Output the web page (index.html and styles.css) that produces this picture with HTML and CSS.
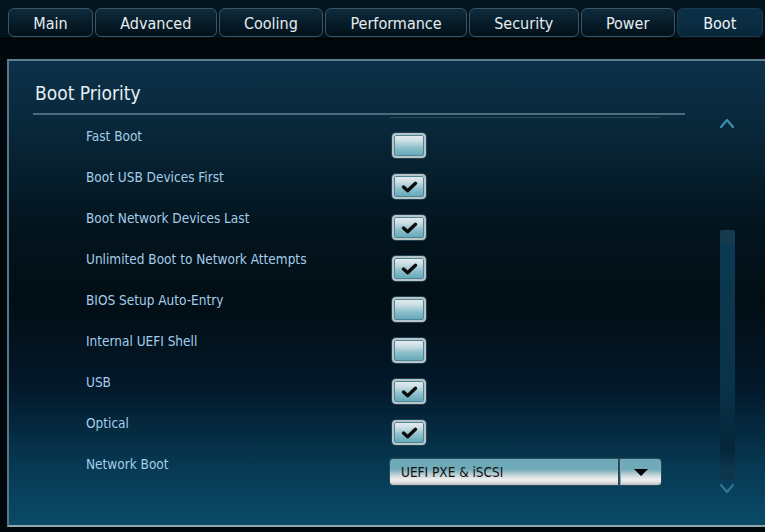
FILE: index.html
```html
<!DOCTYPE html>
<html lang="en">
<head>
<meta charset="utf-8">
<title>Boot</title>
<link rel="stylesheet" href="styles.css">
</head>
<body>
<div class="screen">
  <nav class="tabs">
    <span class="tab">Main</span>
    <span class="tab">Advanced</span>
    <span class="tab">Cooling</span>
    <span class="tab">Performance</span>
    <span class="tab">Security</span>
    <span class="tab">Power</span>
    <span class="tab active">Boot</span>
  </nav>
  <div class="band"></div>
  <section class="panel">
    <h2 class="panel-title">Boot Priority</h2>
    <div class="panel-body">
      <div class="settings">
        <div class="ghost-line"></div>
        <div class="row"><span class="label">Fast Boot</span><span class="check"></span></div>
        <div class="row"><span class="label">Boot USB Devices First</span><span class="check on"><svg viewBox="0 0 18 13"><path d="M2.5 6.5 L7 10.5 L15.5 2.5"/></svg></span></div>
        <div class="row"><span class="label">Boot Network Devices Last</span><span class="check on"><svg viewBox="0 0 18 13"><path d="M2.5 6.5 L7 10.5 L15.5 2.5"/></svg></span></div>
        <div class="row"><span class="label">Unlimited Boot to Network Attempts</span><span class="check on"><svg viewBox="0 0 18 13"><path d="M2.5 6.5 L7 10.5 L15.5 2.5"/></svg></span></div>
        <div class="row"><span class="label">BIOS Setup Auto-Entry</span><span class="check"></span></div>
        <div class="row"><span class="label">Internal UEFI Shell</span><span class="check"></span></div>
        <div class="row"><span class="label">USB</span><span class="check on"><svg viewBox="0 0 18 13"><path d="M2.5 6.5 L7 10.5 L15.5 2.5"/></svg></span></div>
        <div class="row"><span class="label">Optical</span><span class="check on"><svg viewBox="0 0 18 13"><path d="M2.5 6.5 L7 10.5 L15.5 2.5"/></svg></span></div>
        <div class="row"><span class="label">Network Boot</span>
          <span class="select"><span class="select-value">UEFI PXE &amp; iSCSI</span><span class="select-btn"><svg viewBox="0 0 14 7"><path d="M0 0 H14 L7 7 Z"/></svg></span></span>
        </div>
      </div>
      <div class="scroll">
        <svg class="arrow up" viewBox="0 0 16 11"><path d="M2 10 L8 3 L14 10"/></svg>
        <div class="track"><div class="thumb"></div></div>
        <svg class="arrow down" viewBox="0 0 16 11"><path d="M2 2 L8 9 L14 2"/></svg>
      </div>
    </div>
  </section>
</div>
</body>
</html>
```
FILE: styles.css
```css
html, body {
  margin: 0;
  padding: 0;
  background: #01090d;
  overflow: hidden;
}
.screen {
  width: 765px;
  height: 532px;
  font-family: "DejaVu Sans Condensed", "DejaVu Sans", sans-serif;
  font-stretch: condensed;
  background: linear-gradient(to bottom, #03151f 0px, #03121b 38px, #01080c 39px, #01080c 100%);
  overflow: hidden;
}
.tabs {
  display: flex;
  gap: 2px;
  padding: 8px 0 0 8px;
  box-sizing: border-box;
  height: 38px;
}
.tab {
  height: 29px;
  box-sizing: border-box;
  padding: 0 24.3px;
  border: 1px solid #3b5466;
  border-radius: 6px;
  background: linear-gradient(to bottom, #0f2b3d 0%, #071d2a 50%, #02111a 100%);
  color: #e4ecf0;
  font-size: 16px;
  line-height: 29px;
  white-space: nowrap;
}
.tab.active {
  background: linear-gradient(to bottom, #0c3048 0%, #0a2c42 60%, #082638 100%);
  border-color: #1c3a4e;
  color: #f2f6f8;
  padding: 0 25.5px;
}
.band {
  height: 21px;
  border-top: 1px solid #000;
  background: #02090d;
  box-sizing: border-box;
}
.panel {
  margin-left: 7px;
  border-top: 2px solid #5e7f90;
  border-left: 2px solid #56768a;
  border-bottom: 2px solid #8fa6b0;
  background: linear-gradient(to bottom, #0c3149 0%, #082638 16%, #03141e 36%, #020e15 52%, #03182a 70%, #063852 87%, #0a4a67 100%);
  height: 468px;
  box-sizing: border-box;
}
.panel-title {
  margin: 0 80px 0 24px;
  padding: 21px 0 9px 2px;
  border-bottom: 2px solid #4b6c7e;
  font-size: 19px;
  line-height: 22px;
  font-weight: normal;
  color: #e6eef2;
}
.panel-body {
  display: flex;
}
.settings {
  flex: 1;
  padding-top: 2px;
}
.ghost-line {
  margin-left: 381px;
  width: 270px;
  height: 1px;
  background: #2b4b5c;
  margin-bottom: 8px;
}
.row {
  display: flex;
  height: 41px;
  padding-left: 77px;
}
.label {
  width: 303px;
  font-size: 13.5px;
  line-height: 20px;
  color: #a5cde9;
}
.check {
  margin: 7px 0 0 3px;
  width: 34px;
  height: 25px;
  box-sizing: border-box;
  border: 2px solid #b8c4c8;
  border-radius: 4px;
  box-shadow: 0 0 0 1px #1e4252, inset 0 0 0 1px #4d8796;
  background: linear-gradient(to bottom, #e8eef0 0%, #c9dde2 30%, #8ec0cc 60%, #62a6b8 100%);
  display: flex;
  align-items: flex-end;
  justify-content: center;
}
.check svg {
  width: 17px;
  height: 12px;
  margin-bottom: 4px;
  margin-left: 1px;
}
.check svg path {
  fill: none;
  stroke: #0a0a0a;
  stroke-width: 3.6;
  stroke-linecap: round;
  stroke-linejoin: round;
}
.select {
  margin-top: 4px;
  width: 273px;
  height: 28px;
  box-sizing: border-box;
  display: flex;
  border: 1px solid #2a4b5a;
  border-radius: 4px;
  overflow: hidden;
  background: linear-gradient(to bottom, #6eaab8 0%, #70aab8 40%, #c6d4d8 62%, #eeeeee 78%, #e4e4e4 88%, #b4bcc0 100%);
}
.select-value {
  flex: 1;
  padding-left: 11px;
  font-size: 13.5px;
  line-height: 26px;
  color: #111;
  border-right: 2px solid #29495a;
}
.select-btn {
  width: 40px;
  border-left: 1px solid #8aa8b0;
  display: flex;
  align-items: center;
  justify-content: center;
}
.select-btn svg {
  width: 14px;
  height: 7px;
}
.select-btn path {
  fill: #050505;
}
.scroll {
  width: 16px;
  margin-right: 30px;
  padding-top: 2px;
  display: flex;
  flex-direction: column;
  align-items: center;
}
.arrow {
  width: 16px;
  height: 11px;
}
.arrow path {
  fill: none;
  stroke-width: 2.2;
  stroke-linecap: round;
  stroke-linejoin: round;
}
.arrow.up path { stroke: #3b8db3; }
.arrow.down path { stroke: #2f7395; }
.arrow.up { margin-bottom: 102px; }
.track {
  width: 15px;
  height: 250px;
  background: linear-gradient(to bottom, #0b3a52 0%, #09334a 60%, #05263a 88%, #0e364c 96%, #0d3348 100%);
  border-radius: 2px 2px 0 0;
  margin-bottom: 3px;
}
.thumb {
  height: 14px;
  background: #163a50;
  border-radius: 3px 3px 0 0;
}
```
